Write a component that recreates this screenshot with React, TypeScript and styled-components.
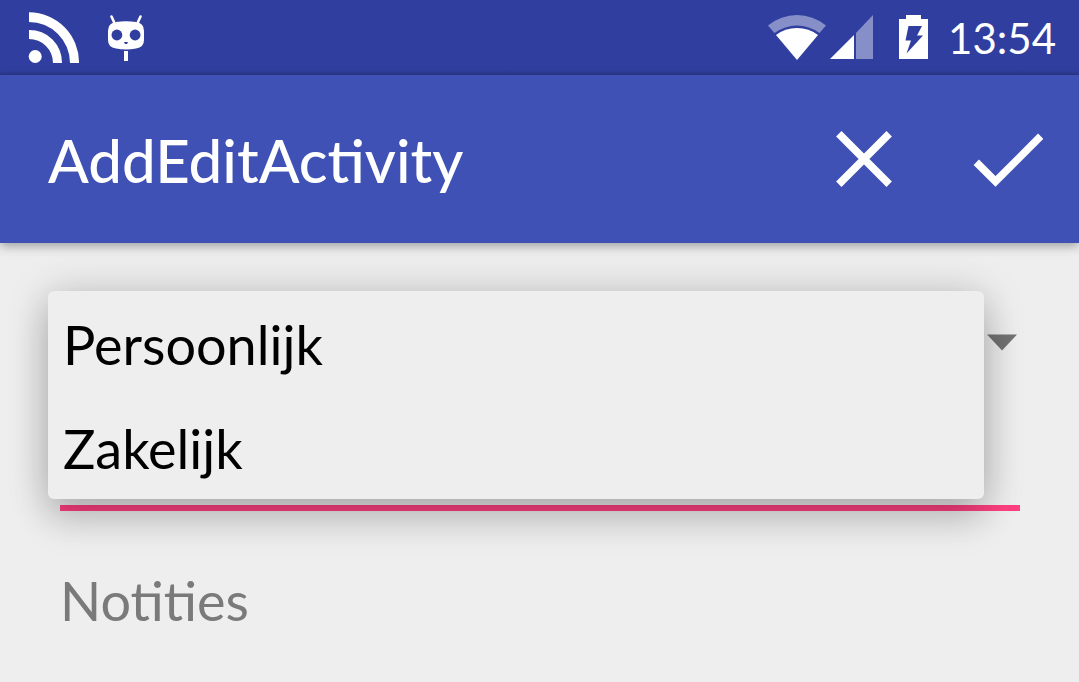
import React, { useState } from "react";
import styled, { createGlobalStyle } from "styled-components";

const GlobalStyle = createGlobalStyle`
  *, *::before, *::after { box-sizing: border-box; }
  body {
    margin: 0;
    background: #eeeeee;
    font-family: Lato, "Open Sans", sans-serif;
  }
  button, input { font: inherit; border: 0; padding: 0; background: none; }
`;

const Screen = styled.div`
  min-height: 100vh;
  background: #eeeeee;
`;

const StatusBar = styled.div`
  display: flex;
  align-items: center;
  justify-content: space-between;
  height: 75px;
  padding: 0 23px 0 28px;
  background: linear-gradient(to bottom, #303f9f calc(100% - 4px), #2b378a 100%);
  color: #ffffff;
`;

const StatusGroup = styled.div<{ $gap: number }>`
  display: flex;
  align-items: center;
  gap: ${(p) => p.$gap}px;
`;

const Clock = styled.time`
  font-size: 42px;
  line-height: 72px;
`;

const AppBar = styled.header`
  position: relative;
  display: flex;
  align-items: center;
  justify-content: space-between;
  height: 168px;
  padding: 0 23px 0 48px;
  background: #3f51b5;
  color: #ffffff;
  box-shadow: 0 3px 10px rgba(0, 0, 0, 0.34);
`;

const Title = styled.h1`
  margin: 0;
  padding-top: 2px;
  font-size: 60px;
  line-height: 72px;
  font-weight: 500;
`;

const Actions = styled.div`
  display: flex;
  gap: 48px;
`;

const IconButton = styled.button`
  display: flex;
  width: 96px;
  height: 96px;
  align-items: center;
  justify-content: center;
  color: #ffffff;
  cursor: pointer;
`;

const Form = styled.main`
  padding: 48px;
`;

const SpinnerField = styled.div`
  position: relative;
  height: 102px;
`;

const SpinnerButton = styled.button`
  display: flex;
  width: 100%;
  height: 100%;
  align-items: center;
  justify-content: flex-end;
  padding-right: 14px;
  color: #737373;
  cursor: pointer;
`;

const Menu = styled.div`
  position: absolute;
  z-index: 1;
  top: 0;
  left: 0;
  width: calc(100% - 47px);
  border-radius: 6px;
  background: #eeeeee;
  box-shadow: 0 24px 36px rgba(0, 0, 0, 0.13), 0 4px 40px rgba(0, 0, 0, 0.23);
`;

const MenuItem = styled.button`
  display: block;
  width: 100%;
  height: 104px;
  padding: 4px 15px 0;
  color: #000000;
  font-size: 54px;
  line-height: 100px;
  text-align: left;
  cursor: pointer;
`;

const TextInput = styled.input<{ $active?: boolean }>`
  display: block;
  width: calc(100% - 23px);
  height: ${(p) => (p.$active ? 118 : 104)}px;
  margin-left: 12px;
  border-bottom: ${(p) => (p.$active ? "6px solid #ff4081" : "0")};
  border-radius: 0;
  outline: none;
  color: #000000;
  font-size: 54px;
  &::placeholder { color: #7a7a7a; opacity: 1; }
`;

const Notes = styled.div`
  padding-top: 37px;
`;

const FeedIcon = () => (
  <svg width="51" height="52" viewBox="0 0 51 52" fill="#fff" aria-hidden="true">
    <circle cx="7.200" cy="44.500" r="6.500" />
    <path d="M1 18A32.500 32.500 0 0 1 34 51H25A24 24 0 0 0 1 27Z" />
    <path d="M1 .3A50 50 0 0 1 51 51H42A41 41 0 0 0 1 10Z" />
  </svg>
);

const RobotIcon = () => (
  <svg width="38" height="48" viewBox="0 0 38 48" aria-hidden="true">
    <path d="M4.500 2.500L7 8M33.500 2.500L31 8" stroke="#fff" strokeWidth="2.600" strokeLinecap="round" />
    <path d="M9 8Q19 6.500 29 8Q37 9 37 17V26Q37 33.500 29 34.500Q19 36.500 9 34.500Q1 33.500 1 26V17Q1 9 9 8Z" fill="#fff" />
    <circle cx="9.900" cy="21" r="5.400" fill="#303f9f" />
    <circle cx="28.100" cy="21" r="5.400" fill="#303f9f" />
    <path d="M17 28H21L20 30H18Z" fill="#303f9f" />
    <path d="M17 37H21V47H17Z" fill="#fff" />
  </svg>
);

const StatusIcons = styled.div`
  display: flex;
  align-items: center;
  margin-bottom: 1px;
  padding-right: 15px;
`;

const WifiIcon = () => (
  <svg width="62" height="46" viewBox="0 0 62 46" aria-hidden="true">
    <path d="M0 11.500Q13 1 29 1T58 11.500L51.500 19Q41 11.500 29 11.500T6.500 19Z" fill="#fff" opacity=".42" />
    <path d="M8 21Q17 14 29 14T50 21L29 46Z" fill="#fff" />
  </svg>
);

const SignalIcon = () => (
  <svg width="69" height="44" viewBox="0 0 69 44" fill="#fff" aria-hidden="true">
    <path d="M0 44L24 20V44Z" />
    <path d="M26 18L43 0V44H26Z" opacity=".42" />
  </svg>
);

const BatteryIcon = () => (
  <svg width="29" height="44" viewBox="0 0 29 44" aria-hidden="true">
    <path d="M7 0H22V4H29V44H0V4H7Z" fill="#fff" />
    <path d="M9.500 11H23L18 20.500H24L7.500 38.500L12 25.500H6.500Z" fill="#303f9f" />
  </svg>
);

const CloseIcon = () => (
  <svg width="56" height="56" viewBox="0 0 56 56" aria-hidden="true">
    <path d="M2.800 2.800L53.200 53.200M53.200 2.800L2.800 53.200" stroke="currentColor" strokeWidth="7.600" />
  </svg>
);

const CheckIcon = () => (
  <svg width="70" height="56" viewBox="0 0 70 56" fill="none" aria-hidden="true">
    <path d="M3.300 31.300L22.500 50.500L67.700 5.300" stroke="currentColor" strokeWidth="7.600" />
  </svg>
);

const ArrowIcon = () => (
  <svg width="30" height="17" viewBox="0 0 30 17" aria-hidden="true">
    <path d="M0 .5H30L15 16.500Z" fill="currentColor" />
  </svg>
);

const categories = ["Persoonlijk", "Zakelijk"];

export default function App() {
  const [open, setOpen] = useState(true);

  return (
    <Screen>
      <GlobalStyle />
      <StatusBar>
        <StatusGroup $gap={28}>
          <FeedIcon />
          <RobotIcon />
        </StatusGroup>
        <StatusGroup $gap={5}>
          <StatusIcons>
            <WifiIcon />
            <SignalIcon />
            <BatteryIcon />
          </StatusIcons>
          <Clock dateTime="13:54">13:54</Clock>
        </StatusGroup>
      </StatusBar>
      <AppBar>
        <Title>AddEditActivity</Title>
        <Actions>
          <IconButton type="button" aria-label="Annuleren"><CloseIcon /></IconButton>
          <IconButton type="button" aria-label="Opslaan"><CheckIcon /></IconButton>
        </Actions>
      </AppBar>
      <Form>
        <SpinnerField>
          <SpinnerButton
            type="button"
            aria-label="Categorie"
            aria-haspopup="listbox"
            aria-expanded={open}
            onClick={() => setOpen(!open)}
          >
            <ArrowIcon />
          </SpinnerButton>
          {open && (
            <Menu role="listbox" aria-label="Categorie">
              {categories.map((name) => (
                <MenuItem key={name} type="button" role="option" aria-selected={false} onClick={() => setOpen(false)}>
                  {name}
                </MenuItem>
              ))}
            </Menu>
          )}
        </SpinnerField>
        <TextInput $active aria-label="Titel" />
        <Notes>
          <TextInput aria-label="Notities" placeholder="Notities" />
        </Notes>
      </Form>
    </Screen>
  );
}
